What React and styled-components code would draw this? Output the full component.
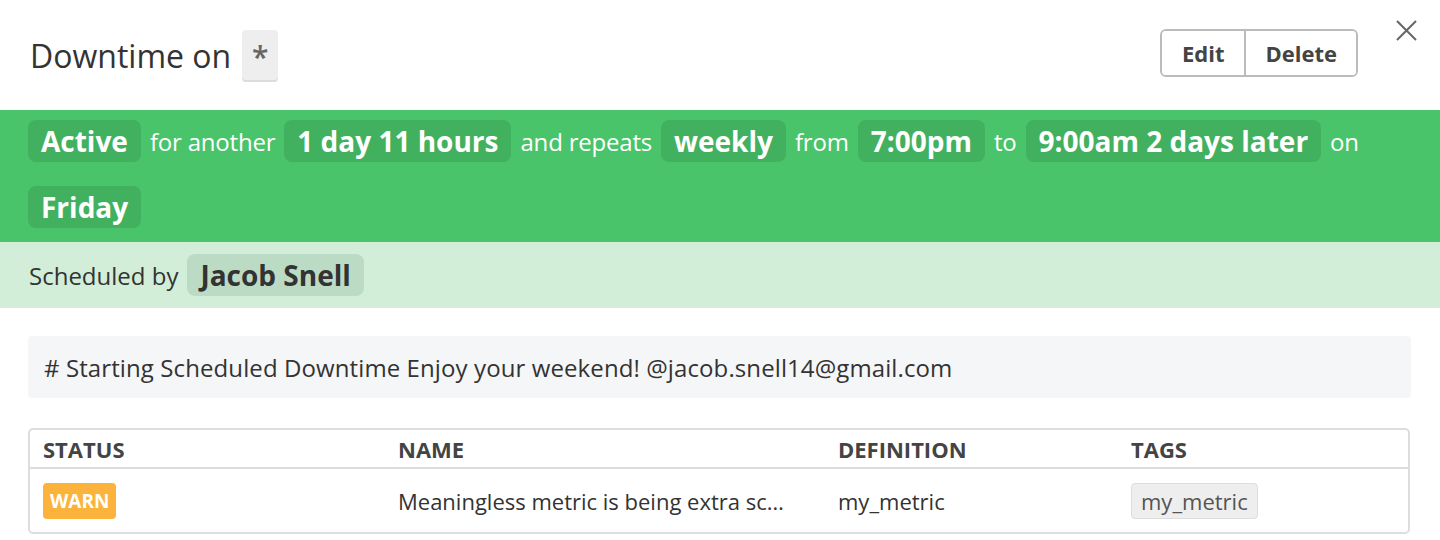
import React from "react";
import styled, { createGlobalStyle } from "styled-components";

const GlobalStyle = createGlobalStyle`
  body {
    margin: 0;
    background: #ffffff;
    font-family: "Open Sans", "Noto Sans", sans-serif;
    color: #333333;
  }
`;

const Page = styled.div`
  width: 1440px;
`;

const Header = styled.div`
  position: relative;
  height: 110px;
  display: flex;
  align-items: center;
  justify-content: space-between;
  padding: 0 82px 0 30px;
  box-sizing: border-box;
`;

const Title = styled.h1`
  margin: 0;
  display: flex;
  align-items: center;
  gap: 11px;
  font-size: 32px;
  font-weight: 400;
  color: #333;
`;

const Scope = styled.span`
  display: inline-flex;
  align-items: flex-start;
  justify-content: center;
  width: 36px;
  height: 50px;
  box-sizing: border-box;
  padding-top: 6px;
  background: #eeeeee;
  border-radius: 4px;
  box-shadow: 0 2px 0 #dcdcdc;
  color: #666;
  font-size: 30px;
  font-weight: 600;
`;

const ButtonGroup = styled.div`
  display: flex;
  border: 2px solid #bbbbbb;
  border-radius: 6px;
  overflow: hidden;
  height: 48px;
  box-sizing: border-box;
  margin-top: -4px;
`;

const GroupButton = styled.button`
  border: none;
  border-left: ${(p) => (p.$first ? "none" : "2px solid #bbbbbb")};
  background: #fff;
  padding: 0 ${(p) => (p.$first ? "20px" : "19px")};
  font-family: "Open Sans", sans-serif;
  font-size: 22px;
  font-weight: 700;
  color: #444;
  cursor: pointer;
`;

const Close = styled.button`
  position: absolute;
  top: 19px;
  right: 22px;
  width: 23px;
  height: 23px;
  padding: 0;
  border: none;
  background: none;
  cursor: pointer;
`;

const ActiveBand = styled.div`
  background: #49c46b;
  padding: 10px 28px 14px;
  display: flex;
  flex-wrap: wrap;
  align-items: center;
  column-gap: 9px;
  row-gap: 24px;
  color: #fff;
`;

const Words = styled.span`
  font-size: 24px;
  letter-spacing: -0.2px;
  color: #ffffff;
`;

const Chip = styled.span`
  display: inline-flex;
  align-items: center;
  height: 42px;
  padding: 0 13px;
  border-radius: 8px;
  background: ${(p) => p.$bg || "#42b15f"};
  color: ${(p) => p.$color || "#ffffff"};
  font-size: 28px;
  font-weight: 700;
`;

const ScheduledBand = styled.div`
  background: #d2eed9;
  height: 66px;
  padding: 0 28px 0 29px;
  display: flex;
  align-items: center;
  gap: 9px;
`;

const ScheduledText = styled.span`
  font-size: 24px;
  color: #333;
`;

const Message = styled.div`
  margin: 28px 29px 0 28px;
  height: 62px;
  display: flex;
  align-items: center;
  padding: 0 16px;
  background: #f5f6f8;
  border-radius: 4px;
  font-size: 24px;
  letter-spacing: 0.1px;
  color: #333;
`;

const Table = styled.div`
  margin: 30px 30px 0 28px;
  border: 2px solid #dddddd;
  border-radius: 5px;
`;

const Row = styled.div`
  display: grid;
  grid-template-columns: 355px 440px 293px 1fr;
  align-items: center;
  padding-left: 13px;
  height: ${(p) => (p.$head ? "37px" : "63px")};
  border-top: ${(p) => (p.$head ? "none" : "2px solid #dddddd")};
`;

const HeadCell = styled.div`
  font-size: 22px;
  font-weight: 700;
  color: #444;
  text-transform: uppercase;
`;

const Cell = styled.div`
  font-size: 22px;
  color: #333;
  white-space: nowrap;
`;

const Badge = styled.span`
  display: inline-flex;
  align-items: center;
  height: 36px;
  padding: 0 7px;
  border-radius: 4px;
  background: #fbb33c;
  color: #fff;
  font-size: 19px;
  font-weight: 700;
`;

const Tag = styled.span`
  display: inline-flex;
  align-items: center;
  height: 34px;
  padding: 0 9px;
  background: #eeeeee;
  border: 1px solid #dddddd;
  border-radius: 4px;
  color: #555;
  font-size: 22px;
`;

export default function App() {
  return (
    <Page>
      <GlobalStyle />
      <Header>
        <Title>
          Downtime on <Scope>*</Scope>
        </Title>
        <ButtonGroup>
          <GroupButton $first>Edit</GroupButton>
          <GroupButton>Delete</GroupButton>
        </ButtonGroup>
        <Close aria-label="Close">
          <svg width="23" height="23" viewBox="0 0 23 23">
            <path d="M2 2 L21 21 M21 2 L2 21" stroke="#666" strokeWidth="2" />
          </svg>
        </Close>
      </Header>

      <ActiveBand>
        <Chip>Active</Chip>
        <Words>for another</Words>
        <Chip>1 day 11 hours</Chip>
        <Words>and repeats</Words>
        <Chip>weekly</Chip>
        <Words>from</Words>
        <Chip>7:00pm</Chip>
        <Words>to</Words>
        <Chip>9:00am 2 days later</Chip>
        <Words>on</Words>
        <Chip>Friday</Chip>
      </ActiveBand>

      <ScheduledBand>
        <ScheduledText>Scheduled by</ScheduledText>
        <Chip $bg="#bcdbc5" $color="#333">Jacob Snell</Chip>
      </ScheduledBand>

      <Message>
        # Starting Scheduled Downtime Enjoy your weekend! @jacob.snell14@gmail.com
      </Message>

      <Table>
        <Row $head>
          <HeadCell>Status</HeadCell>
          <HeadCell>Name</HeadCell>
          <HeadCell>Definition</HeadCell>
          <HeadCell>Tags</HeadCell>
        </Row>
        <Row>
          <div>
            <Badge>WARN</Badge>
          </div>
          <Cell>Meaningless metric is being extra sc…</Cell>
          <Cell>my_metric</Cell>
          <div>
            <Tag>my_metric</Tag>
          </div>
        </Row>
      </Table>
    </Page>
  );
}
